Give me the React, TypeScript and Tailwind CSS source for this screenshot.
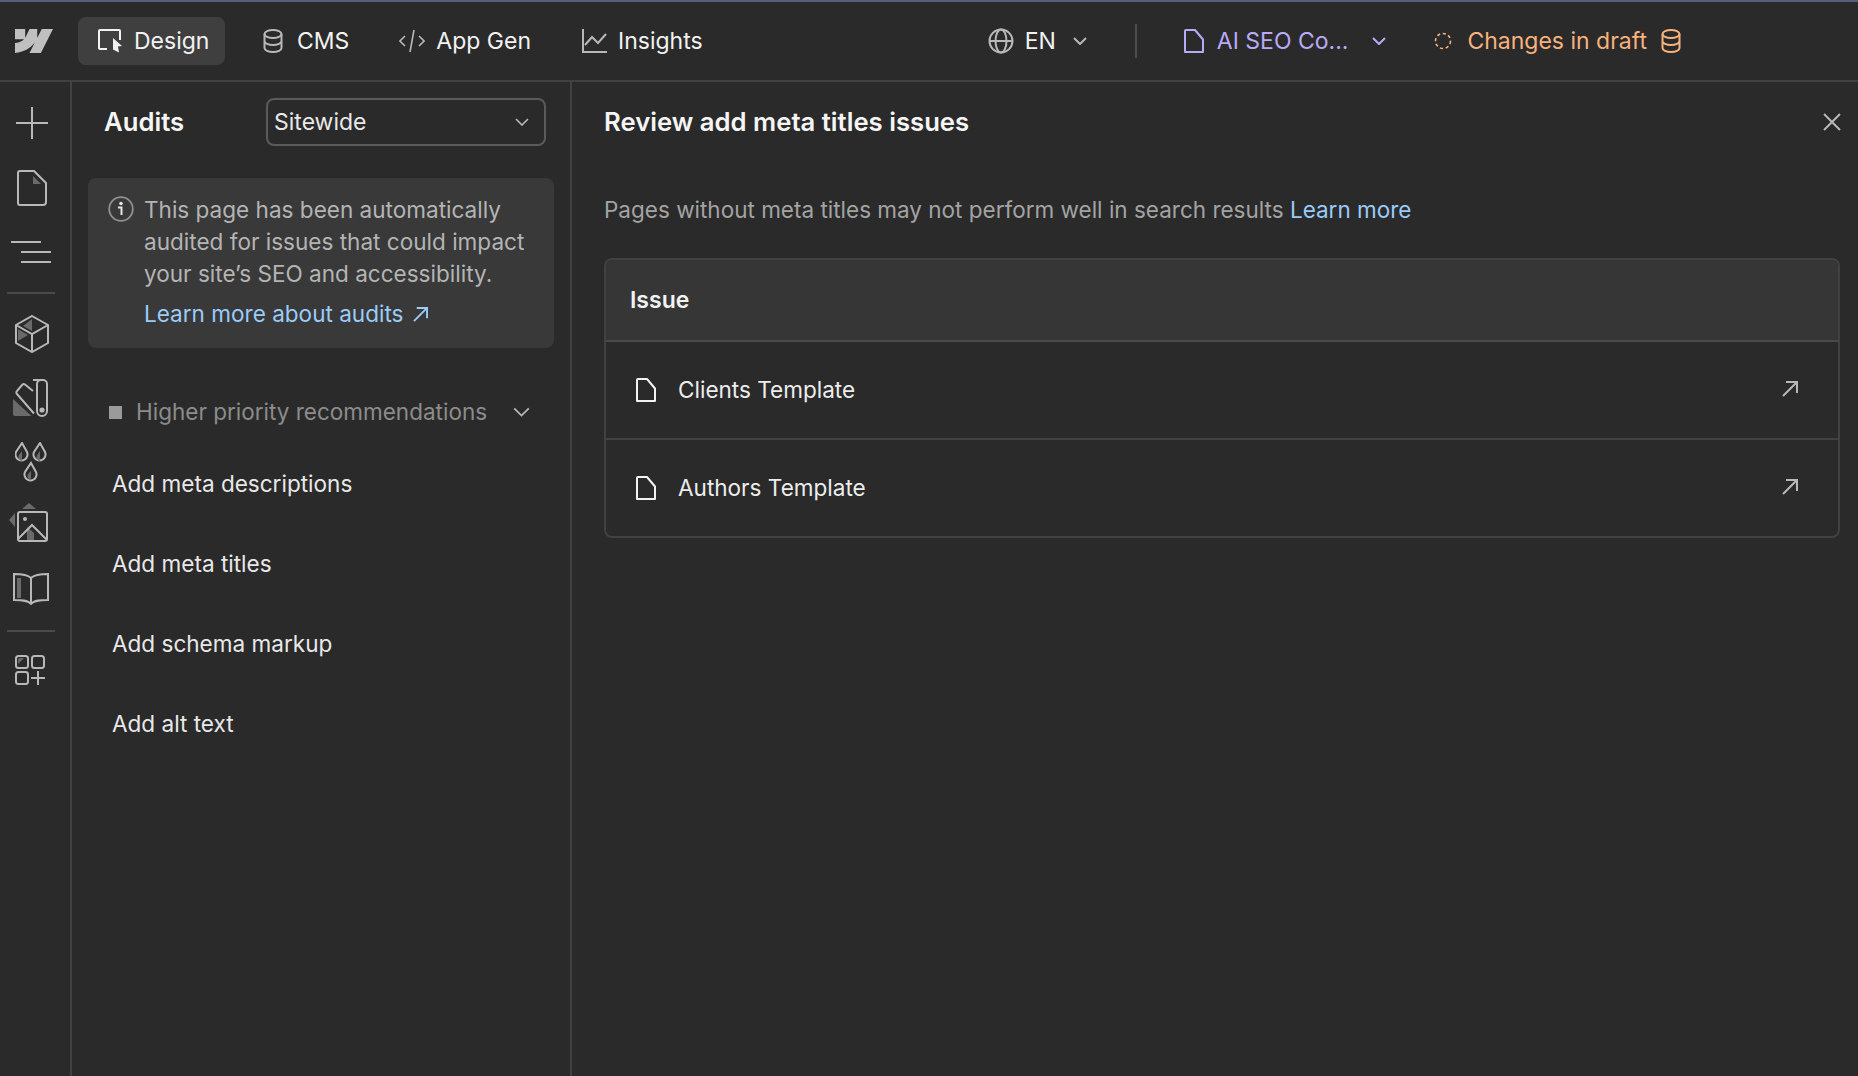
import React from "react";

const Svg = ({ w, h, vb, className, children }: { w: number; h: number; vb?: string; className?: string; children: React.ReactNode }) => (
  <svg width={w} height={h} viewBox={vb ?? `0 0 ${w} ${h}`} fill="none" stroke="currentColor" strokeWidth={2} className={`shrink-0 ${className ?? ""}`}>
    {children}
  </svg>
);

const Chevron = ({ w = 14, h = 8, sw = 2, className }: { w?: number; h?: number; sw?: number; className?: string }) => (
  <Svg w={w} h={h} vb="0 0 14 8" className={className}><path d="M1 1l6 6 6-6" strokeWidth={sw} /></Svg>
);

const Db = ({ className }: { className?: string }) => (
  <Svg w={20} h={24} className={className}>
    <ellipse cx="10" cy="5" rx="8.5" ry="4" />
    <path d="M1.5 5v14c0 2.2 3.8 4 8.5 4s8.5-1.8 8.5-4V5M1.5 12c0 2.2 3.8 4 8.5 4s8.5-1.8 8.5-4" />
  </Svg>
);

const Doc = ({ w = 20, h = 24, className }: { w?: number; h?: number; className?: string }) => (
  <Svg w={w} h={h} vb="0 0 20 24" className={className}>
    <path d="M2 1h9l8 9.5V23H1V2a1 1 0 0 1 1-1z" strokeLinejoin="round" />
  </Svg>
);

const ArrowUR = ({ size = 16, className }: { size?: number; className?: string }) => (
  <Svg w={size} h={size} vb="0 0 16 16" className={className}><path d="M1 15L15 1M4 1h11v11" /></Svg>
);

const RailIcon = ({ children, className }: { children: React.ReactNode; className?: string }) => (
  <div className={`flex justify-center text-[#b8b8b8] ${className ?? ""}`}>{children}</div>
);

function TopBar() {
  return (
    <header className="flex h-[80px] items-center border-b-2 border-[#414141] bg-[#2a2a2a] text-[23px] text-[#f2f2f2]">
      <svg width="38" height="24" viewBox="0 4.5 24 15" preserveAspectRatio="none" className="ml-[15px] shrink-0 text-[#c0c0c0]" fill="currentColor">
        <path d="M24 4.515l-7.658 14.97H9.149l3.205-6.204h-.144C9.566 16.713 5.621 18.973 0 19.485v-6.118s3.596-.213 5.71-2.435H0V4.515h6.417V9.8l.144-.001 2.622-5.284h4.854V9.77h.144l2.72-5.255H24z" />
      </svg>
      <div className="ml-[25px] flex h-[48px] w-[147px] items-center rounded-lg bg-[#3f3f3f] pl-[20px]">
        <svg width="26" height="24" viewBox="0 0 26 24" className="shrink-0" fill="none" stroke="#f2f2f2" strokeWidth="2">
          <path d="M9 20H2a1 1 0 0 1-1-1V2a1 1 0 0 1 1-1h19a1 1 0 0 1 1 1v9" />
          <path d="M15 9l9 8-4 .5 1 6-6-3V9z" fill="#f2f2f2" stroke="none" />
        </svg>
        <span className="ml-[10px]">Design</span>
      </div>
      <Db className="ml-[38px] text-[#b8b8b8]" />
      <span className="ml-[14px]">CMS</span>
      <Svg w={26} h={24} className="ml-[50px] text-[#b8b8b8]"><path d="M6 7l-5 5 5 5M20 7l5 5-5 5M15 1l-4 22" strokeWidth="1.6" /></Svg>
      <span className="ml-[11px]">App Gen</span>
      <Svg w={25} h={24} className="ml-[51px] text-[#b8b8b8]"><path d="M1 0v23h24M3 16l7-8 6 6 8-9" /></Svg>
      <span className="ml-[11px]">Insights</span>
      <Svg w={26} h={26} vb="0 0 26 26" className="ml-[285px] text-[#b8b8b8]">
        <circle cx="13" cy="13" r="11.5" /><ellipse cx="13" cy="13" rx="5.5" ry="11.5" /><path d="M1.5 13h23" />
      </Svg>
      <span className="ml-[11px]">EN</span>
      <Chevron className="ml-[17px] text-[#b8b8b8]" />
      <div className="ml-[48px] h-[34px] w-[2px] bg-[#4f4f4f]" />
      <Doc w={20} h={24} className="ml-[47px] text-[#b9aaf7]" />
      <span className="ml-[13px] text-[#b9aaf7]">AI SEO Co...</span>
      <Chevron className="ml-[24px] text-[#b9aaf7]" />
      <Svg w={18} h={18} vb="0 0 18 18" className="ml-[48px] text-[#f8b27c]"><circle cx="9" cy="9" r="7.5" strokeDasharray="3.2 2.6" strokeWidth="1.6" /></Svg>
      <span className="ml-[15px] text-[#f8b27c]">Changes in draft</span>
      <Db className="ml-[14px] text-[#f8b27c]" />
    </header>
  );
}

function Rail() {
  return (
    <aside className="flex w-[72px] shrink-0 flex-col border-r-2 border-[#414141] pr-[6px] pt-[25px]">
      <RailIcon>
        <Svg w={32} h={32}><path d="M16 0v32M0 16h32" /></Svg>
      </RailIcon>
      <RailIcon className="mt-[31px]">
        <svg width="30" height="36" viewBox="0 0 30 36" fill="none" stroke="currentColor" strokeWidth="2">
          <path d="M3 1h14l12 12v19a3 3 0 0 1-3 3H3a2 2 0 0 1-2-2V3a2 2 0 0 1 2-2z" />
          <path d="M16 6l8 8h-8z" fill="#6a6a6a" stroke="none" />
        </svg>
      </RailIcon>
      <RailIcon className="mt-[34px]">
        <Svg w={40} h={24} className="mr-[2px]"><path d="M0 2h30M10 12h30M10 22h30" /></Svg>
      </RailIcon>
      <div className="mx-[7px] mt-[28px] h-[2px] w-[48px] bg-[#4a4a4a]" />
      <RailIcon className="mt-[21px]">
        <svg width="34" height="38" viewBox="0 0 34 38" fill="none" stroke="currentColor" strokeWidth="2">
          <path d="M17 1l16 9v18l-16 9-16-9V10zM1 10l16 9 16-9M17 19v18" />
          <path d="M17 4v12l-9-5zM3 14l10 6-10 6z" fill="#6a6a6a" stroke="none" />
        </svg>
      </RailIcon>
      <RailIcon className="mt-[26px]">
        <svg width="36" height="38" viewBox="0 0 36 38" fill="none" stroke="currentColor" strokeWidth="2" className="mr-[2px]">
          <path d="M20 1h10a4 4 0 0 1 4 4v27a5 5 0 0 1-10 0V5a4 4 0 0 1 4-4z" />
          <path d="M20 12l-8-6.5a2 2 0 0 0-2.5 0L4 12a2 2 0 0 0 0 3l17 19.5" />
          <path d="M0 20l18.5 17H2a2 2 0 0 1-2-2z" fill="#6a6a6a" stroke="none" />
          <circle cx="29" cy="31" r="2.6" fill="currentColor" stroke="none" />
        </svg>
      </RailIcon>
      <RailIcon className="mt-[25px]">
        <svg width="32" height="40" viewBox="0 0 32 40" fill="none" stroke="currentColor" strokeWidth="2" className="mr-[2px]">
          <path d="M7 1l5 9a6 6 0 1 1-11 0zM25 1l5 9a6 6 0 1 1-11 0zM16 21l5 9a6 6 0 1 1-11 0z" />
          <path d="M7 9v10a4 4 0 0 1-3-6zM25 9v10a4 4 0 0 1-3-6zM16 29v9a4 4 0 0 1-3-6z" fill="#6a6a6a" stroke="none" />
        </svg>
      </RailIcon>
      <RailIcon className="mt-[21px]">
        <svg width="40" height="40" viewBox="0 0 40 40" fill="none" stroke="currentColor" strokeWidth="2" className="mr-[6px]">
          <path d="M20 0l7 6H13zM0 17l6-7v14zM18 39V24l7 6v9z" fill="#6a6a6a" stroke="none" />
          <rect x="9" y="9" width="29" height="29" rx="2" />
          <path d="M9 36l14-14 15 15" />
          <circle cx="16" cy="16" r="2" fill="currentColor" stroke="none" />
        </svg>
      </RailIcon>
      <RailIcon className="mt-[30px]">
        <svg width="36" height="32" viewBox="0 0 36 32" fill="none" stroke="currentColor" strokeWidth="2" className="mr-[2px]">
          <path d="M18 5c-3-3-10-4-17-4v26c7 0 14 0 17 4 3-4 10-4 17-4V1c-7 0-14 1-17 4zM18 5v26" />
          <rect x="4" y="5" width="4" height="20" fill="#6a6a6a" stroke="none" />
        </svg>
      </RailIcon>
      <div className="mx-[7px] mt-[25px] h-[2px] w-[48px] bg-[#4a4a4a]" />
      <RailIcon className="mt-[23px]">
        <svg width="30" height="30" viewBox="0 0 30 30" fill="none" stroke="currentColor" strokeWidth="2" className="mr-[4px]">
          <rect x="1" y="1" width="12" height="12" rx="2.5" />
          <rect x="17" y="1" width="12" height="12" rx="2.5" />
          <rect x="1" y="17" width="12" height="12" rx="2.5" />
          <path d="M23 16v14M16 23h14" />
          <path d="M3 9l6-6H5a2 2 0 0 0-2 2z" fill="#6a6a6a" stroke="none" />
        </svg>
      </RailIcon>
    </aside>
  );
}

function AuditPanel() {
  const items = ["Add meta descriptions", "Add meta titles", "Add schema markup", "Add alt text"];
  return (
    <section className="w-[500px] shrink-0 border-r-2 border-[#414141] px-4 pt-[16px]">
      <div className="flex h-[48px] items-center pl-[16px] pr-[8px]">
        <h2 className="text-[25.7px] font-semibold text-[#f5f5f5]">Audits</h2>
        <div className="ml-auto flex h-[48px] w-[280px] items-center justify-between rounded-lg border-2 border-[#5a5a5a] pl-[6px] pr-[15px] text-[23px] text-[#e8e8e8]">
          Sitewide
          <Chevron className="text-[#b8b8b8]" sw={1.6} />
        </div>
      </div>
      <div className="mt-[32px] flex h-[170px] w-[466px] gap-[10px] rounded-lg bg-[#393939] pl-5 pt-[16px]">
        <svg width="26" height="26" viewBox="0 0 26 26" fill="none" className="mt-[2px] shrink-0">
          <circle cx="13" cy="13" r="11.8" stroke="#8f8f8f" strokeWidth="1.8" />
          <circle cx="13" cy="7.5" r="1.8" fill="#e6e6e6" />
          <path d="M10 11.5h3.5V19" stroke="#e6e6e6" strokeWidth="2" />
        </svg>
        <div className="text-[22.55px] leading-[32px] text-[#b4b4b4]">
          <p className="whitespace-nowrap">This page has been automatically<br />audited for issues that could impact<br />your site’s SEO and accessibility.</p>
          <a className="mt-2 flex items-center gap-[9px] text-[#9bcbf8]">Learn more about audits <ArrowUR size={15} /></a>
        </div>
      </div>
      <div className="mt-[48px] flex h-[32px] items-center pl-[21px] pr-[24px] text-[22.5px] text-[#8c8c8c]">
        <span className="h-[13px] w-[13px] bg-[#9a9a9a]" />
        <span className="ml-[14px]">Higher priority recommendations</span>
        <Chevron w={17} h={10} sw={1.4} className="ml-auto text-[#b8b8b8]" />
      </div>
      <ul className="mt-[40px] pl-[24px] text-[22.55px] leading-[32px] text-[#e8e8e8]">
        {items.map((t) => (
          <li key={t} className="h-[80px]">{t}</li>
        ))}
      </ul>
    </section>
  );
}

function Row({ name, last }: { name: string; last?: boolean }) {
  return (
    <div className={`flex items-center pl-[30px] pr-[40px] ${last ? "h-[96px]" : "h-[98px] border-b-2 border-[#414141]"}`}>
      <Doc w={20} h={24} className="text-[#f2f2f2]" />
      <span className="ml-[22px] text-[22.55px] text-[#ededed]">{name}</span>
      <ArrowUR size={16} className="ml-auto -translate-y-[1px] text-[#b8b8b8]" />
    </div>
  );
}

function ReviewPanel() {
  return (
    <main className="min-w-0 flex-1 pl-8 pr-[17px] pt-[16px]">
      <div className="flex h-[48px] items-center">
        <h1 className="text-[25.7px] font-semibold text-[#f5f5f5]">Review add meta titles issues</h1>
        <Svg w={18} h={18} className="ml-auto text-[#b8b8b8]"><path d="M1 1l16 16M17 1L1 17" /></Svg>
      </div>
      <p className="mt-[48px] h-[32px] text-[22.5px] leading-[32px] text-[#a3a3a3]">
        Pages without meta titles may not perform well in search results <a className="text-[#9bcbf8]">Learn more</a>
      </p>
      <div className="mt-[32px] w-[1236px] overflow-hidden rounded-lg border-2 border-[#414141]">
        <div className="flex h-[82px] items-center border-b-2 border-[#4a4a4a] bg-[#363636] pl-[24px] text-[23px] font-semibold text-[#f2f2f2]">
          Issue
        </div>
        <Row name="Clients Template" />
        <Row name="Authors Template" last />
      </div>
    </main>
  );
}

export default function App() {
  return (
    <div className="flex h-[1076px] w-[1858px] flex-col overflow-hidden bg-[#2a2a2a] font-['Inter',sans-serif]">
      <div className="h-[2px] bg-[#55607a]" />
      <TopBar />
      <div className="flex min-h-0 flex-1">
        <Rail />
        <AuditPanel />
        <ReviewPanel />
      </div>
    </div>
  );
}
